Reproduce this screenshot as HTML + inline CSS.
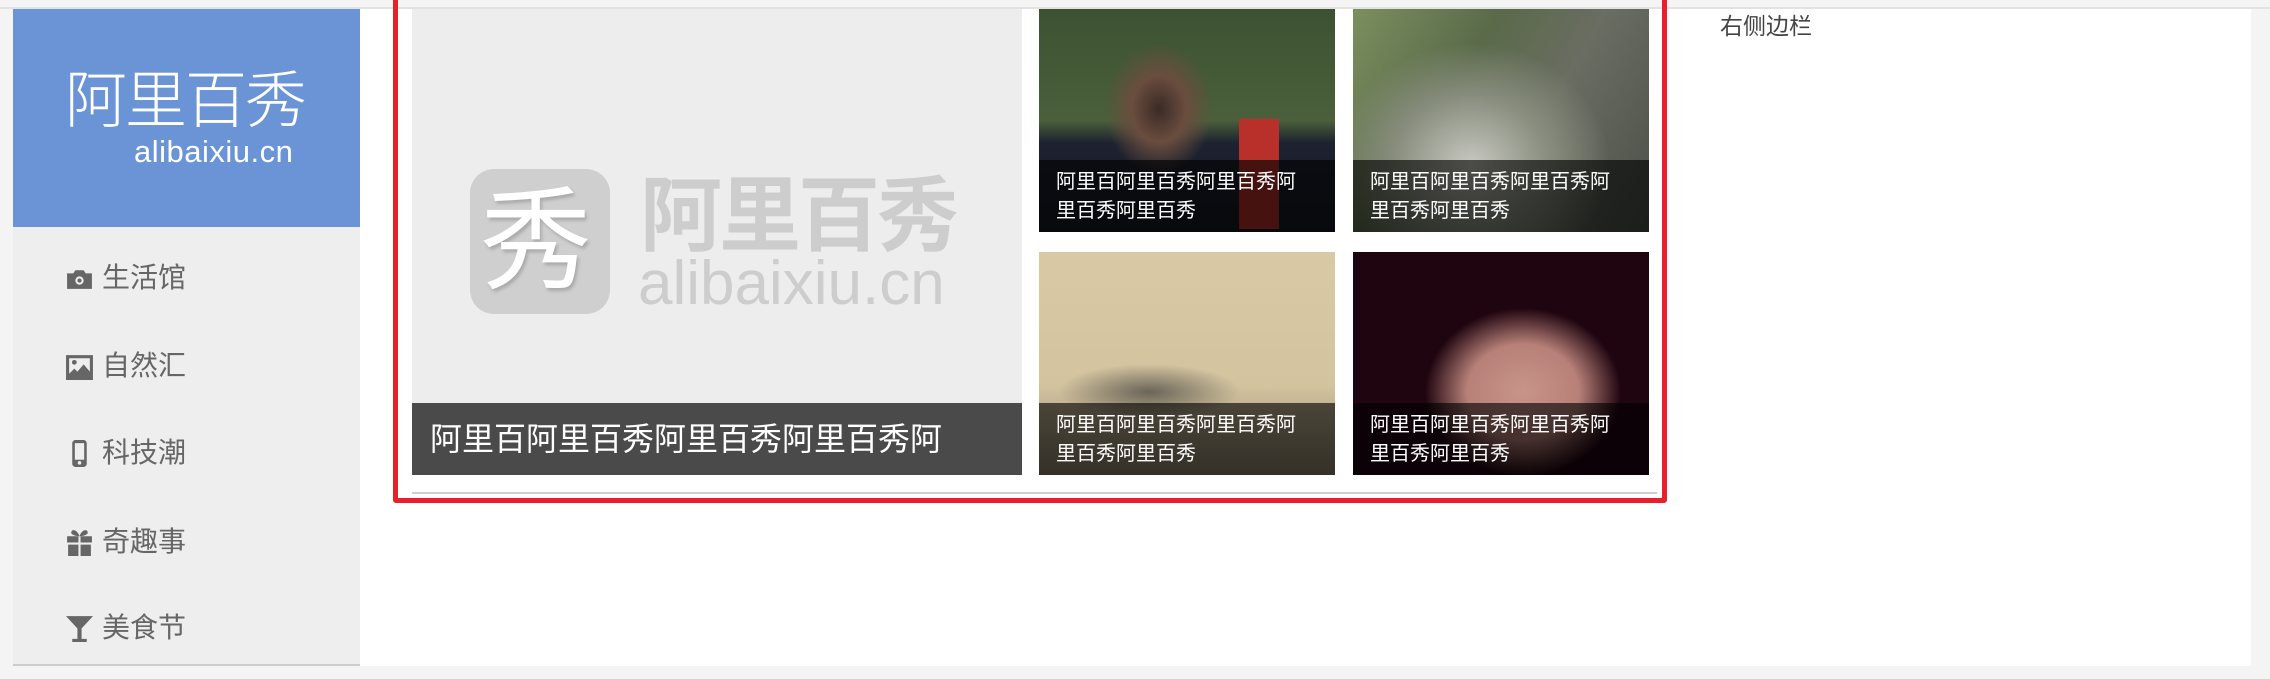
<!DOCTYPE html>
<html><head><meta charset="utf-8"><style>
*{margin:0;padding:0;box-sizing:border-box}
body{width:2270px;height:679px;background:#f4f4f4;position:relative;overflow:hidden;font-family:"Liberation Sans","Noto Sans CJK SC",sans-serif}
.abs{position:absolute}
.topline{left:0;top:7px;width:2270px;height:2px;background:#e2e2e2}
.white{left:360px;top:9px;width:1891px;height:657px;background:#fff}
.side{left:13px;top:9px;width:347px;height:657px;background:#eee;border-bottom:2px solid #ccc}
.logo{left:13px;top:9px;width:347px;height:218px;background:#6b94d6;color:#fff}
.nav{left:65px;color:#666;font-size:28px;line-height:40px;height:40px;display:flex;align-items:center}
.nav svg{width:29px;height:29px;margin-right:8px}
.red{left:393px;top:-5px;width:1274px;height:508px;border:5px solid #e8202a;border-radius:3px}
.big{left:412px;top:9px;width:610px;height:466px;background:#ededed;overflow:hidden}
.cap{position:absolute;left:0;bottom:0;width:100%;color:#fff}
.sm{width:296px;height:223px;overflow:hidden}
.sm .cap{height:72px;background:rgba(0,0,0,.62);font-size:20px;line-height:29px;padding:8px 0 0 17px}
</style></head><body>
<div class="abs topline"></div>
<div class="abs white"></div>
<div class="abs side"></div>
<div class="abs logo">
 <div class="abs" style="left:52px;top:58px;font-size:62px;font-weight:300;letter-spacing:-2px;line-height:70px">阿里百秀</div>
 <div class="abs" style="left:121px;top:123px;font-size:31px;line-height:40px;letter-spacing:0.5px">alibaixiu.cn</div>
</div>
<div class="abs nav" style="top:258px"><svg viewBox="0 0 28 28"><path fill="#666" d="M2 9h6l2-3h8l2 3h6v15H2z"/><circle cx="14" cy="16" r="4" fill="#eee"/><circle cx="14" cy="16" r="2" fill="#666"/></svg>生活馆</div>
<div class="abs nav" style="top:346px"><svg viewBox="0 0 28 28"><path fill="#666" d="M1 3h26v24H1z"/><path fill="#eee" d="M4 6h20v13l-6-7-6 7-3-3-5 5z"/><circle cx="9" cy="10" r="2.3" fill="#666"/></svg>自然汇</div>
<div class="abs nav" style="top:433px"><svg viewBox="0 0 28 28"><rect x="7" y="1" width="14" height="26" rx="3" fill="#666"/><rect x="9.5" y="4" width="9" height="16" fill="#eee"/><circle cx="14" cy="23" r="1.7" fill="#eee"/></svg>科技潮</div>
<div class="abs nav" style="top:522px"><svg viewBox="0 0 28 28"><path fill="#666" d="M2 8h24v6H2zM3 16h10v11H3zM15 16h10v11H15zM8 2c3 0 5 3 6 6-3 0-7-1-8-3 0-2 1-3 2-3zM20 2c-3 0-5 3-6 6 3 0 7-1 8-3 0-2-1-3-2-3z"/><rect x="13" y="8" width="2" height="19" fill="#eee"/></svg>奇趣事</div>
<div class="abs nav" style="top:608px"><svg viewBox="0 0 28 28"><path fill="#666" d="M1 2h26L16 14v10h5v3H7v-3h5V14z"/></svg>美食节</div>

<div class="abs big">
 <div class="abs" style="left:58px;top:160px;width:140px;height:145px;border-radius:24px;background:#cfcfcf"></div>
 <div class="abs" style="left:68px;top:168px;font-size:112px;color:#fff;line-height:130px;text-shadow:2px 3px 3px #aaa">秀</div>
 <div class="abs" style="left:228px;top:158px;font-size:82px;font-weight:bold;color:#cdcdcd;line-height:100px;letter-spacing:-3px">阿里百秀</div>
 <div class="abs" style="left:226px;top:240px;font-size:62px;color:#cdcdcd;line-height:70px">alibaixiu.cn</div>
 <div class="cap" style="height:72px;background:#4a4a4a;font-size:32px;line-height:72px;padding-left:18px;white-space:nowrap;overflow:hidden">阿里百阿里百秀阿里百秀阿里百秀阿</div>
</div>

<div class="abs sm" style="left:1039px;top:9px;background:radial-gradient(ellipse 90px 110px at 120px 100px,#3a2a26 0,#6a4d3e 30%,transparent 60%),linear-gradient(180deg,#3c5232 0,#4a5f3a 50%,#1e2230 60%,#161a24 100%)">
 <div class="abs" style="left:200px;top:110px;width:40px;height:110px;background:#b9302a"></div>
 <div class="cap">阿里百阿里百秀阿里百秀阿<br>里百秀阿里百秀</div></div>
<div class="abs sm" style="left:1353px;top:9px;background:radial-gradient(ellipse at 40% 70%,#c8c8c0 0,#8a8f80 30%,transparent 55%),linear-gradient(120deg,#7b8f5e 0,#5a6a4a 35%,#6a6d62 60%,#4a4f48 100%)">
 <div class="cap">阿里百阿里百秀阿里百秀阿<br>里百秀阿里百秀</div></div>
<div class="abs sm" style="left:1039px;top:252px;background:radial-gradient(ellipse 130px 40px at 110px 140px,#6a6558 0,transparent 70%),linear-gradient(180deg,#d9c9a5 0,#d3c39f 60%,#8a7f6a 100%)">
 <div class="cap">阿里百阿里百秀阿里百秀阿<br>里百秀阿里百秀</div></div>
<div class="abs sm" style="left:1353px;top:252px;background:radial-gradient(ellipse 140px 120px at 170px 140px,#c8948a 0,#b78078 40%,transparent 70%),#1f0510">
 <div class="cap">阿里百阿里百秀阿里百秀阿<br>里百秀阿里百秀</div></div>

<div class="abs" style="left:412px;top:492px;width:1245px;height:2px;background:#cfcfcf"></div>
<div class="abs red"></div>
<div class="abs" style="left:1720px;top:11px;font-size:23px;color:#444;line-height:30px">右侧边栏</div>
</body></html>
